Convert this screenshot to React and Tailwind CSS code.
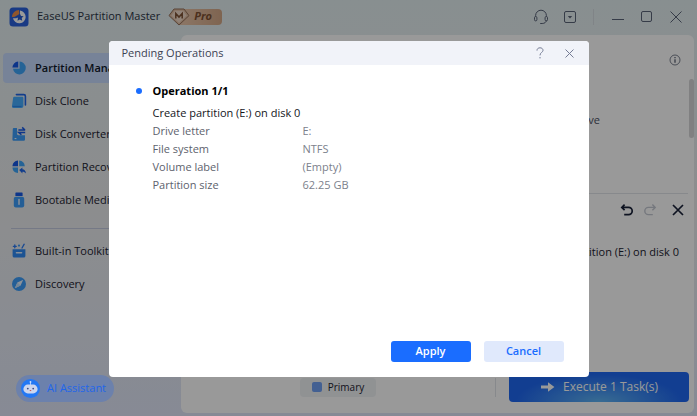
import React from 'react';

const NAV_MAIN = [
  { label: 'Partition Manager', icon: PieIcon, active: true },
  { label: 'Disk Clone', icon: CloneIcon },
  { label: 'Disk Converter', icon: ConverterIcon },
  { label: 'Partition Recovery', icon: RecoveryIcon },
  { label: 'Bootable Media', icon: UsbIcon },
];

const NAV_TOOLS = [
  { label: 'Built-in Toolkit', icon: ToolkitIcon },
  { label: 'Discovery', icon: CompassIcon },
];

const DETAILS = [
  ['Drive letter', 'E:'],
  ['File system', 'NTFS'],
  ['Volume label', '(Empty)'],
  ['Partition size', '62.25 GB'],
];

function Logo() {
  return (
    <svg className="h-5 w-5" viewBox="0 0 20 20">
      <rect x="0.5" y="0.5" width="19" height="19" rx="3.5" fill="#2a62dc" />
      <path d="M11 3.6a6.4 6.4 0 1 1-7 7.6h3.4L11 8z" fill="#fff" />
      <path d="M10 3A7.4 7.4 0 0 0 2.8 9.8c1.6.4 3 .2 4.2-.8L10.4 7z" fill="#f0904a" />
      <path d="M10.8 6.6l1.2 2.3 2.6.4-1.9 1.8.5 2.6-2.4-1.2-2.3 1.2.4-2.6L7 9.3l2.6-.4z" fill="#2459d0" />
    </svg>
  );
}

/* Sidebar icons */
function PieIcon() {
  return (
    <svg className="h-4 w-4" viewBox="0 0 16 16">
      <path d="M8.6 1.6A6.4 6.4 0 1 1 2 8.8h6.6z" fill="#3fa6fa" />
      <path d="M7.2 1.6v6H1.4a6 6 0 0 1 5.8-6z" fill="#1659e6" />
    </svg>
  );
}

function CloneIcon() {
  return (
    <svg className="h-4 w-4" viewBox="0 0 16 16">
      <path d="M5.4 1.6h7.4a1.6 1.6 0 0 1 1.6 1.6V12" fill="none" stroke="#1f66ea" strokeWidth="1.6" strokeLinecap="round" />
      <path d="M3.4 3.8h7.8a1.2 1.2 0 0 1 1.2 1.2V13a2 2 0 0 1-2 2H2.6A1.6 1.6 0 0 1 1 13l1.1-8a1.3 1.3 0 0 1 1.3-1.2z" fill="#45acff" />
      <path d="M1.6 13.4h9" stroke="#2c83ee" strokeWidth="1" />
    </svg>
  );
}

function ConverterIcon() {
  return (
    <svg className="h-4 w-4" viewBox="0 0 16 16">
      <path d="M2.8 2H6v5.8a1.4 1.4 0 0 0 1.4 1.4H14v4.4a1.2 1.2 0 0 1-1.2 1.2H2.6a1.2 1.2 0 0 1-1.2-1.2L1.8 3a1 1 0 0 1 1-1z" fill="#3d9dfa" />
      <path d="M7.4 4h6.8M11.2 1.4L14 4M14.2 6.6H7.8l2.6 2.2" fill="none" stroke="#1659e6" strokeWidth="1.5" />
      <path d="M3.6 12.6h1.8" stroke="#fff" strokeWidth="1" />
    </svg>
  );
}

function RecoveryIcon() {
  return (
    <svg className="h-4 w-4" viewBox="0 0 16 16">
      <path d="M7 1.6v5.6H1.4A6.2 6.2 0 0 1 7 1.6z" fill="#1659e6" />
      <path d="M8.2 1.6a6.2 6.2 0 0 1 5.6 5.6H8.2z" fill="#3fa6fa" />
      <path d="M1.4 8.4H7V14a6.2 6.2 0 0 1-5.6-5.6z" fill="#3fa6fa" />
      <path d="M8.2 11l3.2-2.6v1.8c2 .2 3.4 1.6 3.6 4.2-.9-1.2-2-1.7-3.6-1.7v1.7z" fill="#1f66ea" />
    </svg>
  );
}

function UsbIcon() {
  return (
    <svg className="h-4 w-4" viewBox="0 0 16 16">
      <path d="M5 .4h6a.6.6 0 0 1 .6.6v3H4.4V1A.6.6 0 0 1 5 .4z" fill="#1659e6" />
      <rect x="2.8" y="4.8" width="10.4" height="10.6" rx="2" fill="#3d9dfa" />
      <path d="M8 7.6v4.6" stroke="#e3f0ff" strokeWidth="1.5" strokeLinecap="round" />
    </svg>
  );
}

function ToolkitIcon() {
  return (
    <svg className="h-4 w-4" viewBox="0 0 16 16">
      <path d="M2.4 3.4h2.8M3.8 2v2.8M13.2 1.2L11 5" stroke="#2b7af3" strokeWidth="1.3" strokeLinecap="round" />
      <circle cx="8" cy="2.6" r="1.1" fill="#3d9dfa" />
      <path d="M1.6 6.2h12.8V13a1.6 1.6 0 0 1-1.6 1.6H3.2A1.6 1.6 0 0 1 1.6 13z" fill="#2f8af6" />
      <path d="M5.4 9.8h5.2" stroke="#e3f0ff" strokeWidth="1.4" strokeLinecap="round" />
    </svg>
  );
}

function CompassIcon() {
  return (
    <svg className="h-4 w-4" viewBox="0 0 16 16">
      <circle cx="8" cy="8" r="7" fill="#3d9dfa" />
      <path d="M12.2 3.8L9.6 9.6 3.8 12.2l2.6-5.8z" fill="#eaf4ff" />
      <path d="M6.4 6.4l3.2 3.2-5.8 2.6z" fill="#c2dffc" />
    </svg>
  );
}

function ProBadge() {
  return (
    <div className="flex items-center">
      <svg className="z-10 h-[18px] w-[22px]" viewBox="0 0 22 18">
        <path d="M6 1h10l5 6.6L11 17 1 7.6z" fill="#e0bda2" stroke="#94705a" strokeWidth="1" />
        <path d="M7 2.8h8l3.6 4.8L11 15 3.4 7.6z" fill="#f0d9c8" />
        <path d="M7.8 10.6V5.4L11 9l3.2-3.6v5.2" fill="none" stroke="#7d5033" strokeWidth="1.5" />
      </svg>
      <span className="-ml-3 flex h-4 w-[44px] items-center rounded-r-sm bg-gradient-to-r from-[#eac7ac] to-[#d3a786] pl-4 text-[11px] font-bold italic text-[#7d5033]">
        Pro
      </span>
    </div>
  );
}

function TitleBar() {
  return (
    <header className="flex h-[35px] items-center pb-1 pl-[9px] pr-[14px] pt-0.5">
      <Logo />
      <h1 className="ml-2 mr-2 text-[11px] font-medium text-[#2b3444]">EaseUS Partition Master</h1>
      <ProBadge />
      <div className="ml-auto flex items-center text-[#5b6478]">
        <button aria-label="Support" className="mr-3.5">
          <svg className="h-4 w-4" viewBox="0 0 16 16" fill="none" stroke="currentColor" strokeWidth="1">
            <path d="M2.6 7.5V6.6a5.3 5.3 0 0 1 10.8 0v.9M13.4 11.5c-.3 1.8-1.9 3-4.2 3" />
            <rect x="1.5" y="7.5" width="2.4" height="4.4" rx="1.2" />
            <rect x="12.1" y="7.5" width="2.4" height="4.4" rx="1.2" />
            <path d="M7.2 14.5h2" />
          </svg>
        </button>
        <button aria-label="Menu">
          <svg className="h-[14px] w-[14px]" viewBox="0 0 14 14" fill="none" stroke="currentColor">
            <rect x="1.5" y="1.5" width="11" height="11" rx="1.5" />
            <path d="M4.8 6h4.4L7 8.4z" fill="currentColor" stroke="none" />
          </svg>
        </button>
        <span className="ml-4 mr-[18px] h-4 w-px bg-[#d5dde1]" />
        <button aria-label="Minimize" className="mr-4">
          <svg className="h-3 w-3" viewBox="0 0 12 12" stroke="currentColor">
            <path d="M0 8.5h12" />
          </svg>
        </button>
        <button aria-label="Maximize" className="mr-4">
          <svg className="h-[13px] w-[13px]" viewBox="0 0 13 13" fill="none" stroke="currentColor">
            <rect x="1.5" y="1.5" width="10" height="10" rx="1.5" />
          </svg>
        </button>
        <button aria-label="Close">
          <svg className="h-[14px] w-[14px]" viewBox="0 0 14 14" stroke="currentColor">
            <path d="M1.5 1.5l11 11M12.5 1.5l-11 11" />
          </svg>
        </button>
      </div>
    </header>
  );
}

function NavItem({ label, icon: Icon, active }) {
  return (
    <a
      href="#"
      className={`flex h-[30px] items-center gap-2 whitespace-nowrap rounded-sm pl-2 text-[11px] ${
        active ? 'bg-[#c6dafd] font-semibold text-[#10182a]' : 'text-[#1c2230]'
      }`}
    >
      <Icon />
      {label}
    </a>
  );
}

function Sidebar() {
  return (
    <aside className="flex w-[181px] shrink-0 flex-col pb-[14px] pl-[3px] pr-[5px] pt-[18px]">
      <nav className="flex flex-col gap-[3px]">
        {NAV_MAIN.map((item) => (
          <NavItem key={item.label} {...item} />
        ))}
        <hr className="mb-1 ml-2 mt-2.5 border-[#c3cae0]" />
        {NAV_TOOLS.map((item) => (
          <NavItem key={item.label} {...item} />
        ))}
      </nav>
      {/* stays lit above the modal shade */}
      <button className="relative z-30 ml-[13px] mt-auto flex h-[27px] items-center gap-[7px] self-start rounded-full bg-[#6c81ac] pl-[5px] pr-2 text-[11px] font-medium text-[#1f66ea]">
        <svg className="h-[19px] w-[19px]" viewBox="0 0 19 19">
          <circle cx="9.5" cy="9.5" r="9.5" fill="#2478f4" />
          <path d="M9.5 2.8V6" stroke="#a9ccff" strokeWidth="1" />
          <circle cx="9.5" cy="3" r="0.9" fill="#cfe0fb" />
          <rect x="2.4" y="5.6" width="14.2" height="8.8" rx="4.4" fill="#cdd6ee" />
          <circle cx="6.8" cy="9.6" r="0.9" fill="#3c4a86" />
          <circle cx="12.2" cy="9.6" r="0.9" fill="#3c4a86" />
          <path d="M8.4 11h2.2l-1.1 1.3z" fill="#c0504d" />
        </svg>
        AI Assistant
      </button>
    </aside>
  );
}

function Workspace() {
  return (
    <main className="mb-[3px] mr-[3px] flex flex-1 flex-col rounded-md bg-white text-[11px] text-[#1c2230]">
      <div className="flex flex-1">
        <div className="flex-1" />
        <section className="flex w-[200px] flex-col">
          <div className="mr-1.5 flex h-[159px] border-b border-[#e2e4e9] pt-[19px]">
            <p className="w-[106px] pt-[58px] text-right text-[#4a5164]">Resize/Move</p>
            <button aria-label="Information" className="ml-auto mr-2 h-3 w-3 self-start text-[#5b6274]">
              <svg viewBox="0 0 12 12" fill="none" stroke="currentColor">
                <circle cx="6" cy="6" r="5" strokeWidth="0.8" />
                <path d="M6 5.2v3.6M6 3v1.2" strokeWidth="1.3" />
              </svg>
            </button>
            <span className="-mr-1.5 mt-[25px] h-[59px] w-[5px] rounded-full bg-[#d6d6d8]" />
          </div>
          <div className="flex items-center justify-end gap-[9px] pr-[10px] pt-[9px] text-[#182038]">
            <button aria-label="Undo">
              <svg className="h-[14px] w-[14px]" viewBox="0 0 14 14" fill="none" stroke="currentColor" strokeWidth="1.7">
                <path d="M2 4.4h6.6a3.6 3.6 0 0 1 0 7.2H4.2M4.6 1.6L1.8 4.4l2.8 2.8" />
              </svg>
            </button>
            <button aria-label="Redo" disabled className="text-[#c4c8d2]">
              <svg className="h-[14px] w-[14px]" viewBox="0 0 14 14" fill="none" stroke="currentColor" strokeWidth="1.4">
                <path d="M12 4.4H5.4a3.6 3.6 0 0 0 0 7.2h4.4M9.4 1.6l2.8 2.8-2.8 2.8" />
              </svg>
            </button>
            <button aria-label="Clear all" className="ml-1.5">
              <svg className="h-3 w-3" viewBox="0 0 12 12" stroke="currentColor" strokeWidth="1.7">
                <path d="M1 1l10 10M11 1L1 11" />
              </svg>
            </button>
          </div>
          <p className="pr-[15px] pt-[27px] text-right">Create partition (E:) on disk 0</p>
        </section>
      </div>
      <footer className="flex items-center pb-[11px] pr-[5px]">
        <div className="flex flex-1 justify-center">
          <span className="flex h-[19px] items-center gap-1.5 rounded-sm bg-[#f1f3f6] px-3 text-[10px]">
            <i className="h-2.5 w-2.5 rounded-xs bg-[#70a0f4]" />
            Primary
          </span>
        </div>
        <span className="mr-[13px] h-[19px] w-px bg-[#e2e4e9]" />
        <button className="flex h-[30px] w-[180px] items-center justify-center gap-2 rounded-sm bg-[#1f68f2] bg-[radial-gradient(ellipse_at_bottom,#5fb4f4_0%,#1f68f2_65%)] text-xs font-medium text-white">
          <svg className="h-3 w-[15px]" viewBox="0 0 15 12">
            <path d="M1 4.6h7V1.2L14.4 6 8 10.8V7.4H1z" fill="#fff" />
          </svg>
          Execute 1 Task(s)
        </button>
      </footer>
    </main>
  );
}

function PendingDialog() {
  return (
    <div
      role="dialog"
      aria-labelledby="pending-title"
      className="flex min-h-[336px] w-[480px] flex-col overflow-hidden rounded-sm bg-white text-[11px]"
    >
      <div className="flex h-6 items-center bg-[#f1f3f9] pl-[13px] pr-[14px] text-[#757c95]">
        <h2 id="pending-title" className="mr-auto text-[#3c4252]">Pending Operations</h2>
        <button aria-label="Help" className="mr-[18px]">
          <svg className="h-3 w-3" viewBox="0 0 12 12" fill="none" stroke="currentColor">
            <path d="M3 3.6C3 1.8 4.2.8 6 .8s3 1 3 2.6C9 5.4 6 5.4 6 8.4M6 10v1.4" />
          </svg>
        </button>
        <button aria-label="Close dialog">
          <svg className="h-[11px] w-[11px]" viewBox="0 0 11 11" stroke="currentColor">
            <path d="M1.5 1.5l8 8M9.5 1.5l-8 8" />
          </svg>
        </button>
      </div>

      <div className="flex-1 pl-[27px] pt-[17px]">
        <h3 className="flex h-[18px] items-center gap-[11px] font-bold text-black">
          <span className="h-1.5 w-1.5 rounded-full bg-[#1a6dff]" />
          Operation 1/1
        </h3>
        <table className="ml-[17px] mt-1 text-left leading-[18px]">
          <caption className="whitespace-nowrap text-left text-[#14161c]">Create partition (E:) on disk 0</caption>
          <tbody>
            {DETAILS.map(([name, value]) => (
              <tr key={name}>
                <th scope="row" className="w-[150px] font-normal text-[#5d626d]">{name}</th>
                <td className="whitespace-nowrap text-[#7c818c]">{value}</td>
              </tr>
            ))}
          </tbody>
        </table>
      </div>

      <div className="flex justify-end gap-[13px] pb-[15px] pr-[25px] font-semibold">
        <button className="h-[21px] w-20 rounded-[3px] bg-[#1a6dff] text-white">Apply</button>
        <button className="h-[21px] w-20 rounded-[3px] bg-[#e0e9fc] text-[#1a6dff]">Cancel</button>
      </div>
    </div>
  );
}

export default function App() {
  return (
    <div className="relative flex min-h-screen flex-col bg-gradient-to-b from-[#e3eef1] via-[#eaeced] to-[#e1e7f8] font-['Open_Sans','Noto_Sans',sans-serif]">
      <TitleBar />
      <div className="flex flex-1">
        <Sidebar />
        <Workspace />
      </div>

      {/* Modal layer */}
      <div className="absolute inset-0 z-20 flex items-center justify-center bg-black/40 pt-0.5">
        <PendingDialog />
      </div>
    </div>
  );
}
